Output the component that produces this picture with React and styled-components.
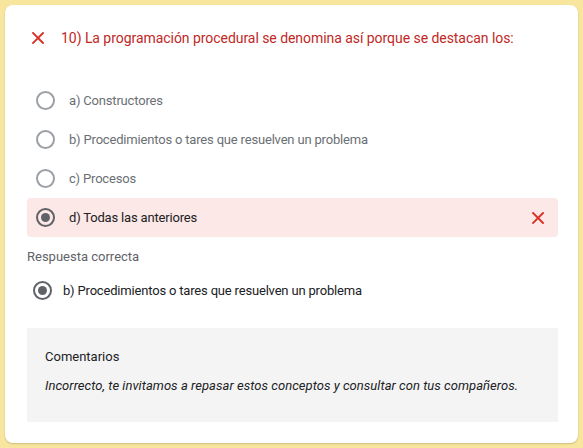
import React from "react";
import styled, { createGlobalStyle } from "styled-components";

const Global = createGlobalStyle`
  html, body { margin: 0; padding: 0; }
  body {
    background: #f8e69f;
    font-family: Roboto, "Liberation Sans", Arial, sans-serif;
    -webkit-font-smoothing: antialiased;
  }
`;

const Page = styled.div`
  padding: 5px;
`;

const Card = styled.div`
  box-sizing: border-box;
  height: 438px;
  background: #fff;
  border-radius: 8px;
  box-shadow: 0 1px 2px rgba(0, 0, 0, 0.18);
  padding: 23px 20px 0 22px;
`;

const Header = styled.div`
  display: flex;
  align-items: center;
  gap: 17px;
  height: 20px;
  padding-left: 5px;
  color: #c0281f;
  font-size: 14px;
  letter-spacing: -0.05px;
`;

const Options = styled.div`
  margin-top: 33px;
  display: flex;
  flex-direction: column;
`;

const OptionRow = styled.div`
  display: flex;
  align-items: center;
  height: 39px;
  padding: 0 14px 0 9px;
  border-radius: 4px;
  background: ${(p) => (p.$wrong ? "#fce8e6" : "transparent")};
  font-size: 13px;
  letter-spacing: -0.18px;
  color: ${(p) => (p.$selected ? "#202124" : "#6b6f74")};
`;

const Radio = styled.span`
  box-sizing: border-box;
  flex: none;
  width: 19px;
  height: 19px;
  border-radius: 50%;
  border: 2px solid ${(p) => (p.$checked ? "#5f6368" : "#9aa0a6")};
  display: flex;
  align-items: center;
  justify-content: center;
  margin-right: ${(p) => p.$gap || 14}px;
  &::after {
    content: "";
    display: ${(p) => (p.$checked ? "block" : "none")};
    width: 9px;
    height: 9px;
    border-radius: 50%;
    background: #5f6368;
  }
`;

const OptionText = styled.span`
  flex: 1;
`;

const SectionLabel = styled.div`
  margin-top: 10px;
  line-height: 20px;
  font-size: 13px;
  color: #5f6368;
`;

const CorrectRow = styled.div`
  display: flex;
  align-items: center;
  height: 30px;
  margin-top: 8px;
  padding-left: 6px;
  font-size: 13px;
  letter-spacing: -0.18px;
  color: #202124;
`;

const Comments = styled.div`
  margin-top: 23px;
  height: 94px;
  box-sizing: border-box;
  background: #f4f4f4;
  padding: 19px 18px 0 18px;
  font-size: 13px;
  color: #202124;
`;

const CommentTitle = styled.div`
  line-height: 20px;
`;

const CommentBody = styled.div`
  margin-top: 9px;
  line-height: 20px;
  font-style: italic;
  letter-spacing: 0.04px;
`;

const CrossIcon = ({ size = 12 }) => (
  <svg width={size} height={size} viewBox="0 0 12 12" style={{ flex: "none", display: "block" }}>
    <path d="M1 1 L11 11 M11 1 L1 11" stroke="#d93025" strokeWidth="1.9" strokeLinecap="square" fill="none" />
  </svg>
);

const options = [
  { text: "a) Constructores" },
  { text: "b) Procedimientos o tares que resuelven un problema" },
  { text: "c) Procesos" },
  { text: "d) Todas las anteriores", selected: true },
];

export default function App() {
  return (
    <>
      <Global />
      <Page>
        <Card>
          <Header>
            <CrossIcon />
            <span>10) La programación procedural se denomina así porque se destacan los:</span>
          </Header>
          <Options>
            {options.map((o) => (
              <OptionRow key={o.text} $wrong={o.selected} $selected={o.selected}>
                <Radio $checked={o.selected} />
                <OptionText>{o.text}</OptionText>
                {o.selected && <CrossIcon />}
              </OptionRow>
            ))}
          </Options>
          <SectionLabel>Respuesta correcta</SectionLabel>
          <CorrectRow>
            <Radio $checked $gap={11} />
            <span>b) Procedimientos o tares que resuelven un problema</span>
          </CorrectRow>
          <Comments>
            <CommentTitle>Comentarios</CommentTitle>
            <CommentBody>
              Incorrecto, te invitamos a repasar estos conceptos y consultar con tus compañeros.
            </CommentBody>
          </Comments>
        </Card>
      </Page>
    </>
  );
}
